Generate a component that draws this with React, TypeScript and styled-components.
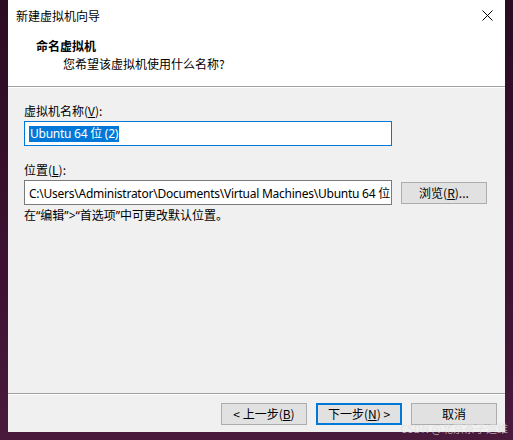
import React from "react";
import styled, { createGlobalStyle } from "styled-components";

const Global = createGlobalStyle`
  html, body { margin: 0; padding: 0; }
  body {
    width: 513px;
    height: 440px;
    overflow: hidden;
    background: linear-gradient(180deg, #2c0c22 0%, #3c1230 60%, #4a1a3c 100%);
    font-family: "Noto Sans CJK SC", "Noto Sans", sans-serif;
    font-size: 12px;
    color: #000;
  }
`;

const Screen = styled.div`
  position: relative;
  width: 513px;
  height: 440px;
  padding-left: 8px;
  box-sizing: border-box;
`;

const Window = styled.div`
  width: 497px;
  height: 432px;
  background: #f0f0f0;
  display: flex;
  flex-direction: column;
`;

const Header = styled.div`
  height: 86px;
  background: #fff;
  border-bottom: 1px solid #a0a0a0;
  box-shadow: 0 1px 0 #fff;
  display: flex;
  flex-direction: column;
  flex-shrink: 0;
`;

const TitleBar = styled.div`
  height: 30px;
  display: flex;
  align-items: center;
  justify-content: space-between;
  padding: 0 10px 0 8px;
`;

const Title = styled.span`
  font-size: 12px;
  line-height: 16px;
  margin-top: 1px;
`;

const Close = styled.svg`
  width: 11px;
  height: 11px;
  margin-right: 2px;
`;

const Heading = styled.div`
  padding-left: 28px;
  margin-top: 8px;
  font-weight: bold;
  font-size: 12px;
  line-height: 16px;
`;

const Sub = styled.div`
  padding-left: 55px;
  font-size: 12px;
  line-height: 16px;
  margin-top: 2px;
`;

const Body = styled.div`
  flex: 1;
  padding: 16px 0 0 16px;
  display: flex;
  flex-direction: column;
`;

const Label = styled.div<{ $gapTop?: number }>`
  line-height: 16px;
  height: 16px;
  margin-top: ${(p) => p.$gapTop ?? 0}px;
  margin-bottom: 2px;
`;

const Row = styled.div`
  display: flex;
  align-items: center;
  gap: 9px;
`;

const Field = styled.div<{ $focus?: boolean }>`
  box-sizing: border-box;
  width: 368px;
  height: 25px;
  background: #fff;
  border: 1px solid ${(p) => (p.$focus ? "#0078d7" : "#7a7a7a")};
  display: flex;
  align-items: center;
  padding-left: 4px;
  white-space: nowrap;
  overflow: hidden;
  font-family: "Noto Sans", "Noto Sans CJK SC", sans-serif;
  font-size: 12px;
  letter-spacing: -0.25px;
`;

const Selected = styled.span`
  background: #0078d7;
  color: #fff;
  line-height: 16px;
  padding: 0 1px;
`;

const Button = styled.div<{ $primary?: boolean }>`
  box-sizing: border-box;
  width: 86px;
  height: 22px;
  background: #e1e1e1;
  border: ${(p) => (p.$primary ? "2px solid #0078d7" : "1px solid #adadad")};
  display: flex;
  align-items: center;
  justify-content: center;
  font-size: 12px;
  line-height: 16px;
`;

const Note = styled.div`
  margin-top: 3px;
  line-height: 16px;
  font-family: "Noto Sans", "Noto Sans CJK SC", sans-serif;
`;

const Footer = styled.div`
  height: 39px;
  border-top: 1px solid #a0a0a0;
  box-shadow: inset 0 1px 0 #fff;
  display: flex;
  justify-content: flex-end;
  gap: 9px;
  padding: 9px 8px 0 0;
  box-sizing: border-box;
  flex-shrink: 0;
`;

const Watermark = styled.div`
  position: absolute;
  right: 5px;
  bottom: 5px;
  font-size: 11px;
  line-height: 13px;
  color: rgba(220, 220, 220, 0.7);
  font-family: "Noto Sans CJK SC", sans-serif;
`;

export default function App() {
  return (
    <>
      <Global />
      <Screen>
        <Window>
          <Header>
            <TitleBar>
              <Title>新建虚拟机向导</Title>
              <Close viewBox="0 0 11 11">
                <path d="M0.5 0.5 L10.5 10.5 M10.5 0.5 L0.5 10.5" stroke="#000" strokeWidth="1" fill="none" />
              </Close>
            </TitleBar>
            <Heading>命名虚拟机</Heading>
            <Sub>您希望该虚拟机使用什么名称?</Sub>
          </Header>
          <Body>
            <Label>
              虚拟机名称(<u>V</u>):
            </Label>
            <Field $focus>
              <Selected>Ubuntu 64 位 (2)</Selected>
            </Field>
            <Label $gapTop={16}>
              位置(<u>L</u>):
            </Label>
            <Row>
              <Field>C:\Users\Administrator\Documents\Virtual Machines\Ubuntu 64 位</Field>
              <Button>
                浏览(<u>R</u>)...
              </Button>
            </Row>
            <Note>在“编辑”{">"}“首选项”中可更改默认位置。</Note>
          </Body>
          <Footer>
            <Button>
              &lt; 上一步(<u>B</u>)
            </Button>
            <Button $primary>
              下一步(<u>N</u>) &gt;
            </Button>
            <Button>取消</Button>
          </Footer>
        </Window>
        <Watermark>CSDN @北京茶子运维</Watermark>
      </Screen>
    </>
  );
}
